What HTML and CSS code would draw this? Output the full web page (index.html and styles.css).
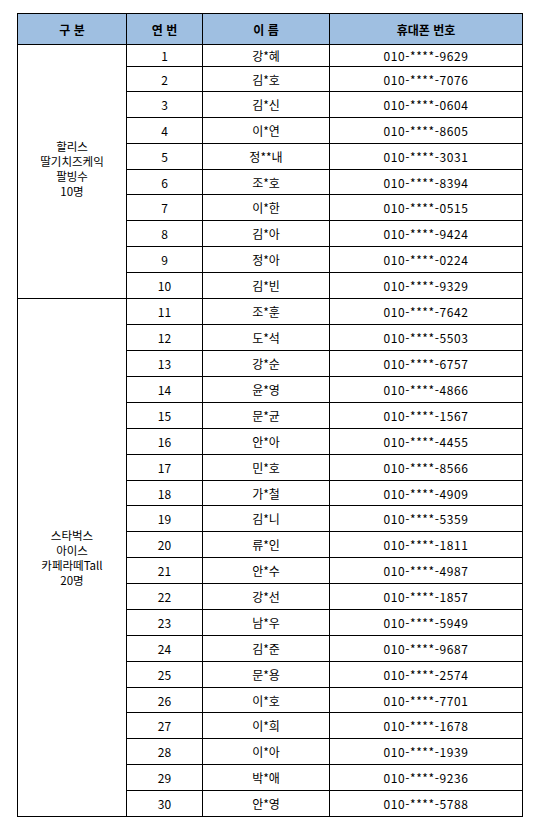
FILE: index.html
```html
<!DOCTYPE html>
<html lang="ko">
<head>
<meta charset="utf-8">
<title>당첨자 명단</title>
<link rel="stylesheet" href="styles.css">
</head>
<body>
<div class="sheet">
  <div class="cell head">구 분</div>
  <div class="cell head">연 번</div>
  <div class="cell head">이 름</div>
  <div class="cell head">휴대폰 번호</div>

  <div class="cell group group-a"><span>할리스</span><span>딸기치즈케익</span><span>팔빙수</span><span>10명</span></div>
  <div class="cell group group-b"><span>스타벅스</span><span>아이스</span><span>카페라떼Tall</span><span>20명</span></div>

  <div class="cell">1</div><div class="cell">강*혜</div><div class="cell num">010-****-9629</div>
  <div class="cell">2</div><div class="cell">김*호</div><div class="cell num">010-****-7076</div>
  <div class="cell">3</div><div class="cell">김*신</div><div class="cell num">010-****-0604</div>
  <div class="cell">4</div><div class="cell">이*연</div><div class="cell num">010-****-8605</div>
  <div class="cell">5</div><div class="cell">정**내</div><div class="cell num">010-****-3031</div>
  <div class="cell">6</div><div class="cell">조*호</div><div class="cell num">010-****-8394</div>
  <div class="cell">7</div><div class="cell">이*한</div><div class="cell num">010-****-0515</div>
  <div class="cell">8</div><div class="cell">김*아</div><div class="cell num">010-****-9424</div>
  <div class="cell">9</div><div class="cell">정*아</div><div class="cell num">010-****-0224</div>
  <div class="cell">10</div><div class="cell">김*빈</div><div class="cell num">010-****-9329</div>
  <div class="cell">11</div><div class="cell">조*훈</div><div class="cell num">010-****-7642</div>
  <div class="cell">12</div><div class="cell">도*석</div><div class="cell num">010-****-5503</div>
  <div class="cell">13</div><div class="cell">강*순</div><div class="cell num">010-****-6757</div>
  <div class="cell">14</div><div class="cell">윤*영</div><div class="cell num">010-****-4866</div>
  <div class="cell">15</div><div class="cell">문*균</div><div class="cell num">010-****-1567</div>
  <div class="cell">16</div><div class="cell">안*아</div><div class="cell num">010-****-4455</div>
  <div class="cell">17</div><div class="cell">민*호</div><div class="cell num">010-****-8566</div>
  <div class="cell">18</div><div class="cell">가*철</div><div class="cell num">010-****-4909</div>
  <div class="cell">19</div><div class="cell">김*니</div><div class="cell num">010-****-5359</div>
  <div class="cell">20</div><div class="cell">류*인</div><div class="cell num">010-****-1811</div>
  <div class="cell">21</div><div class="cell">안*수</div><div class="cell num">010-****-4987</div>
  <div class="cell">22</div><div class="cell">강*선</div><div class="cell num">010-****-1857</div>
  <div class="cell">23</div><div class="cell">남*우</div><div class="cell num">010-****-5949</div>
  <div class="cell">24</div><div class="cell">김*준</div><div class="cell num">010-****-9687</div>
  <div class="cell">25</div><div class="cell">문*용</div><div class="cell num">010-****-2574</div>
  <div class="cell">26</div><div class="cell">이*호</div><div class="cell num">010-****-7701</div>
  <div class="cell">27</div><div class="cell">이*희</div><div class="cell num">010-****-1678</div>
  <div class="cell">28</div><div class="cell">이*아</div><div class="cell num">010-****-1939</div>
  <div class="cell">29</div><div class="cell">박*애</div><div class="cell num">010-****-9236</div>
  <div class="cell">30</div><div class="cell">안*영</div><div class="cell num">010-****-5788</div>
</div>
</body>
</html>
```

FILE: styles.css
```css
html, body {
  margin: 0;
  padding: 0;
  background: #ffffff;
}

body {
  font-family: "Noto Sans CJK KR", "Liberation Sans", sans-serif;
  font-size: 12px;
  color: #000000;
}

.sheet {
  margin: 13px 0 0 17px;
  width: 504px;
  display: grid;
  grid-template-columns: 108px 75px 126px 192px;
  grid-template-rows:
    30px 21px 24px 25px 25px 25px 24px 25px 25px 25px 25px
    25px 25px 25px 25px 25px 25px 25px 24px 25px
    25px 25px 25px 25px 25px 25px 24px 25px 25px 25px 25px;
  gap: 1px;
  background: #000000;
  border: 1px solid #000000;
}

.cell {
  background: #ffffff;
  display: flex;
  align-items: center;
  justify-content: center;
  text-align: center;
  line-height: 15px;
  white-space: nowrap;
}

.head {
  background: #9fbfe1;
  font-weight: bold;
  font-size: 12px;
}

.num {
  letter-spacing: 0.6px;
}

.group {
  grid-column: 1;
  flex-direction: column;
  gap: 0;
}

.group span {
  display: block;
  height: 15px;
  line-height: 15px;
  font-size: 11.5px;
}

.group-a {
  grid-row: 2 / span 10;
  padding-bottom: 6px;
}

.group-b {
  grid-row: 12 / span 20;
}
```
